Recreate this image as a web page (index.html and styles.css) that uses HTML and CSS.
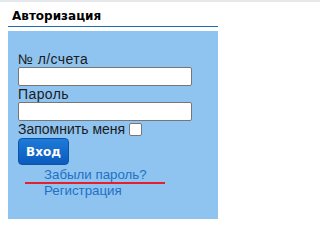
FILE: index.html
```html
<!DOCTYPE html>
<html lang="ru">
<head>
<meta charset="utf-8">
<link rel="stylesheet" href="styles.css">
</head>
<body>
<div class="topbar"></div>
<div class="box">
  <h2 class="title">Авторизация</h2>
  <form class="panel">
    <label class="lbl">№ л/счета</label>
    <input class="field" type="text">
    <label class="lbl">Пароль</label>
    <input class="field" type="password">
    <div class="remember">Запомнить меня <span class="check"></span></div>
    <button class="btn" type="button">Вход</button>
    <div class="links">
      <a class="link" href="#">Забыли пароль?</a>
      <a class="link" href="#">Регистрация</a>
      <span class="redline"></span>
    </div>
  </form>
</div>
</body>
</html>
```

FILE: styles.css
```css
html, body {
  margin: 0;
  padding: 0;
  background: #ffffff;
}
body {
  font-family: "Liberation Sans", Arial, sans-serif;
  font-size: 14px;
  color: #1b1b1b;
}
.topbar {
  height: 2px;
  background: #e6e7ea;
}
.box {
  margin-left: 8px;
  width: 210px;
}
.title {
  margin: 0;
  padding: 7px 0 3px 4px;
  font-family: "DejaVu Sans", Verdana, sans-serif;
  font-size: 12px;
  line-height: 14px;
  font-weight: bold;
  color: #000;
  border-bottom: 1px solid #1c6bb3;
}
.panel {
  margin-top: 4px;
  background: #8fc4f1;
  height: 188px;
  padding: 20px 0 0 10px;
  box-sizing: border-box;
  display: flex;
  flex-direction: column;
  align-items: flex-start;
}
.lbl {
  display: block;
  line-height: 16px;
  font-size: 14px;
  letter-spacing: 0.4px;
}
.field {
  box-sizing: border-box;
  width: 174px;
  height: 19px;
  margin: 0;
  border: 1px solid #767676;
  border-radius: 2px;
  background: #fff;
  padding: 0;
}
.remember {
  display: flex;
  align-items: center;
  gap: 4px;
  line-height: 17px;
  font-size: 14px;
}
.check {
  display: inline-block;
  width: 11px;
  height: 11px;
  border: 1px solid #767676;
  border-radius: 2px;
  background: #fff;
}
.btn {
  margin-top: 0;
  width: 51px;
  height: 27px;
  border: 1px solid #0b55a8;
  border-radius: 4px;
  background: linear-gradient(#1f7ad8, #0a5bbd);
  color: #fff;
  font-family: "DejaVu Sans", Verdana, sans-serif;
  font-weight: bold;
  font-size: 12px;
  padding: 0;
}
.links {
  position: relative;
  display: flex;
  flex-direction: column;
  padding-left: 26px;
  margin-top: 2px;
}
.link {
  color: #2270c4;
  text-decoration: none;
  line-height: 16px;
  font-size: 13.3px;
}
.redline {
  position: absolute;
  left: 7px;
  top: 15px;
  width: 140px;
  height: 2px;
  background: #e5202e;
}
```
